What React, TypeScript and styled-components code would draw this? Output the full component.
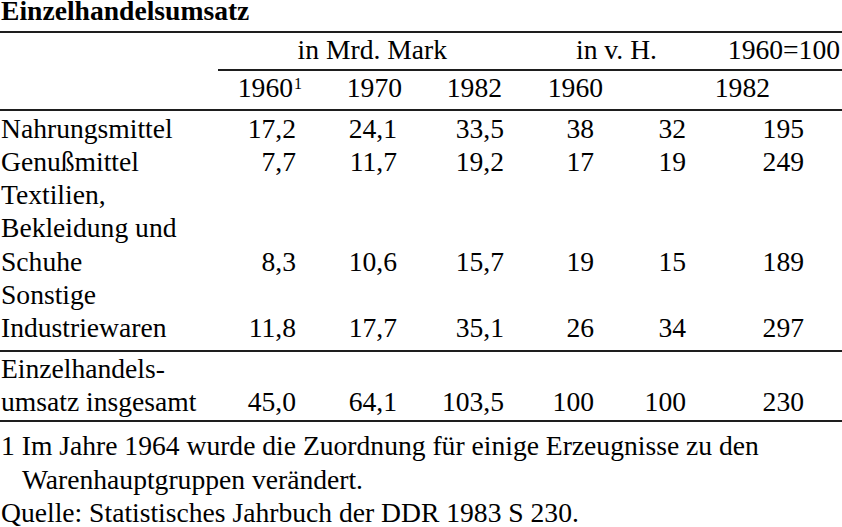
import React from "react";
import styled, { createGlobalStyle } from "styled-components";

const Global = createGlobalStyle`
  html, body { margin: 0; padding: 0; background: #fff; }
  body { font-family: "Liberation Serif", "Times New Roman", serif; color: #000; }
`;

const FS = "27.6px";
const LH = "33.3px";
const COLS = "218px 98px 100px 104px 95px 90px 137px";

const Page = styled.div`
  width: 842px;
  height: 527px;
  overflow: hidden;
  font-size: ${FS};
  line-height: ${LH};
`;

const Title = styled.div`
  font-weight: bold;
  line-height: 22px;
  padding-left: 1px;
  padding-bottom: 9px;
`;

const Rule = styled.div<{ $from?: number }>`
  height: 0;
  border-top: 2px solid #1e1e1e;
  margin-left: ${(p) => p.$from ?? 0}px;
  grid-column: 1 / -1;
`;

const Section = styled.div<{ $pt?: number; $pb?: number }>`
  display: grid;
  grid-template-columns: ${COLS};
  padding-top: ${(p) => p.$pt ?? 0}px;
  padding-bottom: ${(p) => p.$pb ?? 0}px;
`;

const Head = styled.div<{ $col: string; $pr: number }>`
  grid-column: ${(p) => p.$col};
  text-align: right;
  padding-right: ${(p) => p.$pr}px;
  white-space: nowrap;
`;

const Label = styled.div`
  grid-column: 1;
  padding-left: 1px;
`;

const Num = styled.div<{ $pr: number }>`
  align-self: end;
  text-align: right;
  padding-right: ${(p) => p.$pr}px;
  white-space: nowrap;
`;

const Sup = styled.sup`
  font-size: 16px;
  line-height: 0;
  vertical-align: 8px;
  margin-left: 1px;
`;

const Notes = styled.div`
  padding-top: 7px;
  padding-left: 1px;
`;

const Note = styled.div<{ $hang?: boolean }>`
  padding-left: ${(p) => (p.$hang ? 21 : 0)}px;
  text-indent: ${(p) => (p.$hang ? -21 : 0)}px;
`;

const PADS = [20, 19, 16, 21, 19, 38];

type Row = { label: React.ReactNode; values: string[] };

const rows: Row[] = [
  { label: "Nahrungsmittel", values: ["17,2", "24,1", "33,5", "38", "32", "195"] },
  { label: "Genußmittel", values: ["7,7", "11,7", "19,2", "17", "19", "249"] },
  {
    label: (
      <>
        Textilien,
        <br />
        Bekleidung und
        <br />
        Schuhe
      </>
    ),
    values: ["8,3", "10,6", "15,7", "19", "15", "189"],
  },
  {
    label: (
      <>
        Sonstige
        <br />
        Industriewaren
      </>
    ),
    values: ["11,8", "17,7", "35,1", "26", "34", "297"],
  },
];

const total: Row = {
  label: (
    <>
      Einzelhandels-
      <br />
      umsatz insgesamt
    </>
  ),
  values: ["45,0", "64,1", "103,5", "100", "100", "230"],
};

const DataRow = ({ row }: { row: Row }) => (
  <>
    <Label>{row.label}</Label>
    {row.values.map((v, i) => (
      <Num key={i} $pr={PADS[i]}>
        {v}
      </Num>
    ))}
  </>
);

export default function App() {
  return (
    <Page>
      <Global />
      <Title>Einzelhandelsumsatz</Title>
      <Rule />
      <Section $pb={3}>
        <Head $col="2 / 5" $pr={73}>in Mrd. Mark</Head>
        <Head $col="5 / 7" $pr={48}>in v. H.</Head>
        <Head $col="7 / 8" $pr={2}>1960=100</Head>
      </Section>
      <Rule $from={218} />
      <Section $pb={4}>
        <Head $col="2 / 3" $pr={14}>
          1960<Sup>1</Sup>
        </Head>
        <Head $col="3 / 4" $pr={14}>1970</Head>
        <Head $col="4 / 5" $pr={18}>1982</Head>
        <Head $col="5 / 6" $pr={12}>1960</Head>
        <Head $col="6 / 8" $pr={72}>1982</Head>
      </Section>
      <Rule />
      <Section $pt={1} $pb={5}>
        {rows.map((r, i) => (
          <DataRow key={i} row={r} />
        ))}
      </Section>
      <Rule />
      <Section $pb={2}>
        <DataRow row={total} />
      </Section>
      <Rule />
      <Notes>
        <Note $hang>
          1 Im Jahre 1964 wurde die Zuordnung für einige Erzeugnisse zu den
          <br />
          Warenhauptgruppen verändert.
        </Note>
        <Note>Quelle: Statistisches Jahrbuch der DDR 1983 S 230.</Note>
      </Notes>
    </Page>
  );
}
